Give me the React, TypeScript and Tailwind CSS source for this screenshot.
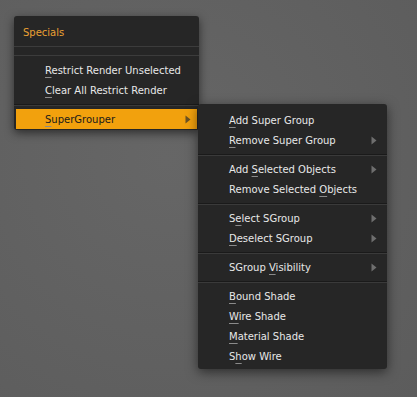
import React from "react";

type Item = { pre: string; key: string; post: string; sub?: boolean };
type Entry = Item | "sep";

const subItems: Entry[] = [
  { pre: "", key: "A", post: "dd Super Group" },
  { pre: "", key: "R", post: "emove Super Group", sub: true },
  "sep",
  { pre: "Add ", key: "S", post: "elected Objects", sub: true },
  { pre: "Remove Selected ", key: "O", post: "bjects" },
  "sep",
  { pre: "S", key: "e", post: "lect SGroup", sub: true },
  { pre: "", key: "D", post: "eselect SGroup", sub: true },
  "sep",
  { pre: "SGroup ", key: "V", post: "isibility", sub: true },
  "sep",
  { pre: "", key: "B", post: "ound Shade" },
  { pre: "", key: "W", post: "ire Shade" },
  { pre: "", key: "M", post: "aterial Shade" },
  { pre: "S", key: "h", post: "ow Wire" },
];

const Arrow = ({ dark }: { dark?: boolean }) => (
  <svg width="6" height="9" viewBox="0 0 6 9" className="shrink-0">
    <path d="M0.5 0.5 L5.5 4.5 L0.5 8.5 Z" fill={dark ? "#6b5224" : "#6e6e6e"} />
  </svg>
);

const Label = ({ it }: { it: Item }) => (
  <span className="whitespace-pre">
    {it.pre}
    <span className="underline decoration-[#8a8a8a] underline-offset-[3px]">{it.key}</span>
    {it.post}
  </span>
);

const Sep = () => (
  <div className="h-[9px] flex flex-col justify-center">
    <div className="h-px bg-[#1a1a1a]" />
    <div className="h-px bg-[#3a3a3a]" />
  </div>
);

const Row = ({ it }: { it: Item }) => (
  <div className="h-5 flex items-center justify-between pt-px pl-[31px] pr-[10px] text-[#e8e8e8]">
    <Label it={it} />
    {it.sub && <Arrow />}
  </div>
);

export default function App() {
  return (
    <div
      className="relative w-[417px] h-[397px] overflow-hidden bg-[radial-gradient(circle_at_40%_40%,#666666,#5c5c5c)] text-[10px] leading-5"
      style={{ fontFamily: '"DejaVu Sans", sans-serif' }}
    >
      {/* main specials menu */}
      <div className="absolute left-[14px] top-[16px] w-[185px] rounded-[3px] bg-[#262626] pt-[7px] pb-px shadow-[0_3px_10px_rgba(0,0,0,0.55)]">
        <div className="h-5 pl-[9px] text-[#eba033]">Specials</div>
        <div className="mt-[3px] h-px bg-[#3c3c3c]" />
        <div className="mt-[8px] h-px bg-[#3c3c3c]" />
        <div className="mt-[4px]">
          <Row it={{ pre: "", key: "R", post: "estrict Render Unselected" }} />
          <Row it={{ pre: "", key: "C", post: "lear All Restrict Render" }} />
        </div>
        <Sep />
        <div className="mx-[2px] h-5 flex items-center justify-between bg-[#f2a10d] pt-px pl-[29px] pr-[6px] text-[#1a1a1a]">
          <Label it={{ pre: "", key: "S", post: "uperGrouper" }} />
          <Arrow dark />
        </div>
      </div>

      {/* SuperGrouper submenu */}
      <div className="absolute left-[198px] top-[104px] w-[189px] rounded-[3px] bg-[#262626] pt-[6px] pb-[3px] shadow-[0_3px_12px_rgba(0,0,0,0.55)]">
        {subItems.map((e, i) => (e === "sep" ? <Sep key={i} /> : <Row key={i} it={e} />))}
      </div>
    </div>
  );
}
